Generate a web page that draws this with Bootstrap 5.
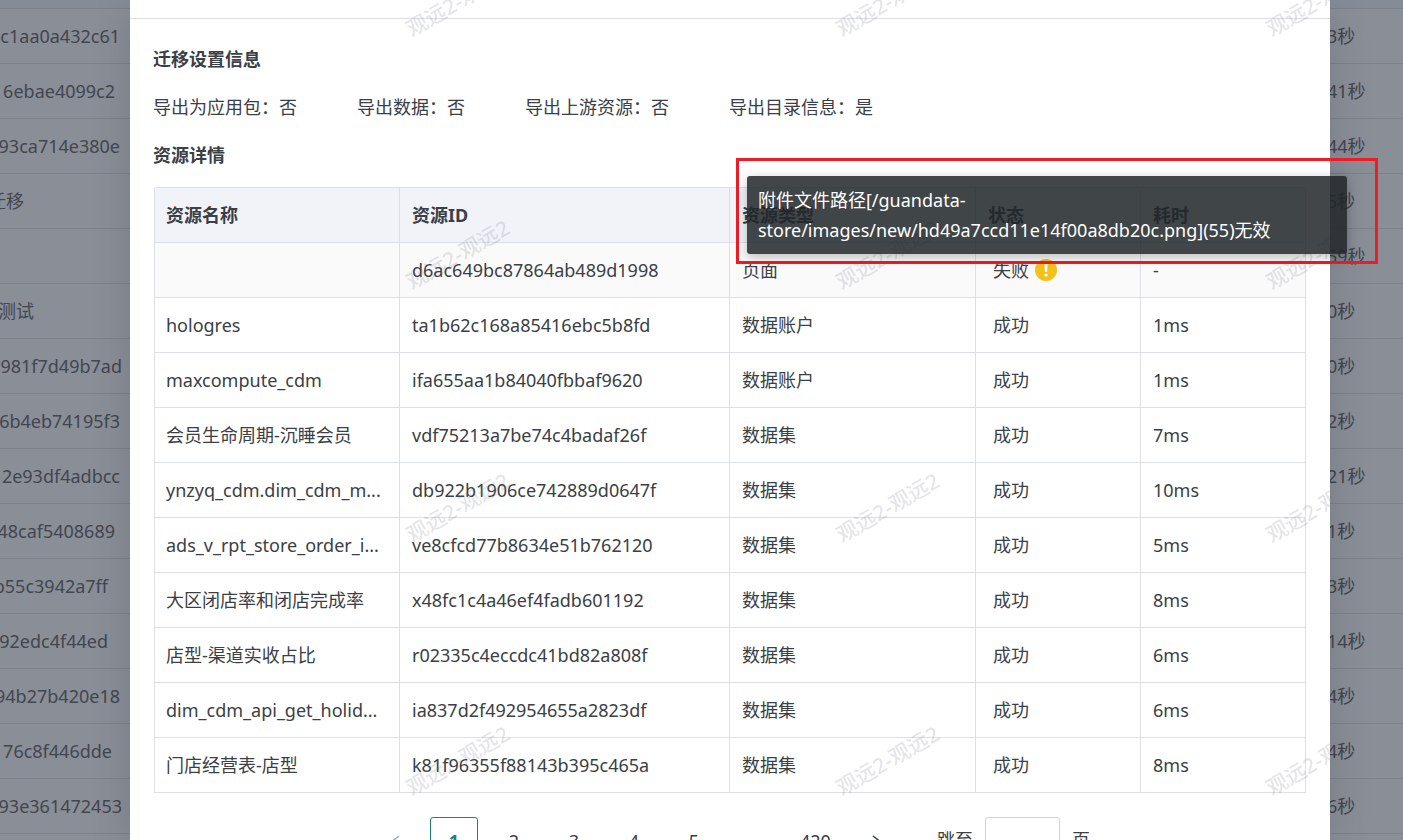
<!DOCTYPE html>
<html lang="zh-CN">
<head>
<meta charset="utf-8">
<meta name="viewport" content="width=device-width, initial-scale=1">
<title>资源迁移详情</title>
<link href="https://cdn.jsdelivr.net/npm/bootstrap@5.3.0/dist/css/bootstrap.min.css" rel="stylesheet">
<style>
  :root { --ink: #3a4046; --line: #dcdfe5; --teal: #18857c; }
  body { font-family: "Noto Sans", "Noto Sans CJK SC", sans-serif; font-size: 18px; color: var(--ink); background: #8a8e97; }

  /* dimmed list behind the dialog */
  .backdrop-list { color: #42464f; }
  .backdrop-list.ids { width: 130px; }
  .backdrop-list.times { width: 73px; }
  .list-head { height: 9px; background: #848d97; border-bottom: 1px solid #7c818b; }
  .list-line { height: 55px; line-height: 54px; border-bottom: 1px solid #7c818b; white-space: nowrap; }
  .ids .list-line { display: flex; justify-content: flex-end; }
  .times .list-line { text-indent: -3px; }
  .end-8 { padding-right: 8px; }
  .end-10 { padding-right: 10px; }
  .end-15 { padding-right: 15px; }
  .end-18 { padding-right: 18px; }
  .end-22 { padding-right: 22px; }
  .end-96 { padding-right: 96px; }
  .end-106 { padding-right: 106px; }

  .dialog { min-width: 0; z-index: 1; background: #fff; box-shadow: 0 8px 40px rgba(0, 0, 0, .14); }
  .dialog-head { height: 19px; border-bottom: 1px solid var(--line); }
  .dialog-body { padding: 24px; }
  .section-title { font-size: 18px; font-weight: 700; line-height: 32px; margin-bottom: 16px; }
  .settings { gap: 60px; line-height: 32px; margin-bottom: 16px; }
  .section-title, .settings { margin-left: -1px; }

  .res-table { table-layout: fixed; width: 100%; border-collapse: separate; border-spacing: 0; border: 1px solid var(--line); border-width: 1px 0 0 1px; border-radius: 3px 3px 0 0; }
  .res-table th, .res-table td { height: 55px; line-height: 54px; padding: 0 11px 0 12px; border: 1px solid var(--line); border-width: 0 1px 1px 0; overflow: hidden; text-overflow: ellipsis; white-space: nowrap; }
  .res-table th { background: #f2f3f8; font-weight: 700; }
  .res-table td:first-child, .res-table th:first-child { padding-left: 11px; }
  .res-table td:nth-child(4) { padding-left: 17px; }
  .res-table .failed td { background: #fafafa; }
  .c-name { width: 245px; } .c-id { width: 330px; } .c-type { width: 246px; } .c-state, .c-cost { width: 165px; }
  .warn-icon { width: 22px; height: 22px; margin-left: 6px; vertical-align: -4px; }

  .pager { gap: 12px; margin-top: 24px; line-height: 46px; }
  .pager button { min-width: 48px; height: 48px; padding: 0 9px; border: 1px solid transparent; border-radius: 3px; background: none; color: var(--ink); line-height: 44px; }
  .pager .current { border-color: var(--teal); color: var(--teal); font-weight: 700; }
  .pager .dots { width: 48px; text-align: center; }
  .pager svg { width: 16px; height: 16px; fill: none; stroke: currentColor; stroke-width: 1.5; }
  .pager button:disabled { color: #a3a9b3; }
  .pager label { margin-left: 24px; }
  .pager input { width: 75px; height: 48px; border: 1px solid #ced2da; border-radius: 3px; padding: 0 12px; }

  .stamp { pointer-events: none; inset: 0; }
  .callout { top: 158px; right: -48px; width: 642px; border: 3px solid #ee1c25; padding: 15px 28px 7px 8px; z-index: 2; }
  .tip { background: rgba(33, 38, 41, .85); color: #fff; border-radius: 3px; padding: 9px 11px; line-height: 30px; box-shadow: 0 3px 12px rgba(0, 0, 0, .25); }
</style>
</head>
<body>
<div class="d-flex vh-100 overflow-hidden">
  <aside class="backdrop-list ids flex-shrink-0 overflow-hidden">
    <div class="list-head"></div>
    <div class="list-line end-10">c1aa0a432c61</div>
    <div class="list-line end-15">6ebae4099c2</div>
    <div class="list-line end-10">93ca714e380e</div>
    <div class="list-line end-106">迁移</div>
    <div class="list-line"></div>
    <div class="list-line end-96">测试</div>
    <div class="list-line end-8">981f7d49b7ad</div>
    <div class="list-line end-10">6b4eb74195f3</div>
    <div class="list-line end-10">2e93df4adbcc</div>
    <div class="list-line end-15">48caf5408689</div>
    <div class="list-line end-22">b55c3942a7ff</div>
    <div class="list-line end-22">92edc4f44ed</div>
    <div class="list-line end-10">94b27b420e18</div>
    <div class="list-line end-18">76c8f446dde</div>
    <div class="list-line end-8">93e361472453</div>
  </aside>

  <main class="dialog position-relative flex-grow-1" role="dialog" aria-label="迁移详情">
    <div class="dialog-head"></div>
    <div class="dialog-body">
      <h2 class="section-title">迁移设置信息</h2>
      <div class="settings d-flex">
        <span>导出为应用包：否</span>
        <span>导出数据：否</span>
        <span>导出上游资源：否</span>
        <span>导出目录信息：是</span>
      </div>
      <h2 class="section-title">资源详情</h2>
      <table class="res-table">
        <colgroup><col class="c-name"><col class="c-id"><col class="c-type"><col class="c-state"><col class="c-cost"></colgroup>
        <thead>
          <tr><th>资源名称</th><th>资源ID</th><th>资源类型</th><th>状态</th><th>耗时</th></tr>
        </thead>
        <tbody>
          <tr class="failed"><td></td><td>d6ac649bc87864ab489d1998</td><td>页面</td><td>失败<svg class="warn-icon" viewBox="0 0 22 22" aria-hidden="true"><circle cx="11" cy="11" r="11" fill="#f2c21b"/><path d="M9.4 4.5h3.2l-.5 8.5h-2.2z" fill="#fff"/><circle cx="11" cy="16" r="1.6" fill="#fff"/></svg></td><td>-</td></tr>
          <tr><td>hologres</td><td>ta1b62c168a85416ebc5b8fd</td><td>数据账户</td><td>成功</td><td>1ms</td></tr>
          <tr><td>maxcompute_cdm</td><td>ifa655aa1b84040fbbaf9620</td><td>数据账户</td><td>成功</td><td>1ms</td></tr>
          <tr><td>会员生命周期-沉睡会员</td><td>vdf75213a7be74c4badaf26f</td><td>数据集</td><td>成功</td><td>7ms</td></tr>
          <tr><td>ynzyq_cdm.dim_cdm_m...</td><td>db922b1906ce742889d0647f</td><td>数据集</td><td>成功</td><td>10ms</td></tr>
          <tr><td>ads_v_rpt_store_order_i...</td><td>ve8cfcd77b8634e51b762120</td><td>数据集</td><td>成功</td><td>5ms</td></tr>
          <tr><td>大区闭店率和闭店完成率</td><td>x48fc1c4a46ef4fadb601192</td><td>数据集</td><td>成功</td><td>8ms</td></tr>
          <tr><td>店型-渠道实收占比</td><td>r02335c4eccdc41bd82a808f</td><td>数据集</td><td>成功</td><td>6ms</td></tr>
          <tr><td>dim_cdm_api_get_holid...</td><td>ia837d2f492954655a2823df</td><td>数据集</td><td>成功</td><td>6ms</td></tr>
          <tr><td>门店经营表-店型</td><td>k81f96355f88143b395c465a</td><td>数据集</td><td>成功</td><td>8ms</td></tr>
        </tbody>
      </table>

      <nav class="pager d-flex justify-content-center" aria-label="分页">
        <button type="button" disabled aria-label="上一页"><svg viewBox="0 0 16 16"><path d="M13 1 4 8l9 7"/></svg></button>
        <button type="button" class="current">1</button>
        <button type="button">2</button>
        <button type="button">3</button>
        <button type="button">4</button>
        <button type="button">5</button>
        <span class="dots">...</span>
        <button type="button">420</button>
        <button type="button" aria-label="下一页"><svg viewBox="0 0 16 16"><path d="m4 1 9 7-9 7"/></svg></button>
        <label for="jump">跳至</label>
        <input id="jump" type="text">
        <span>页</span>
      </nav>
    </div>

    <svg class="stamp position-absolute w-100 h-100" aria-hidden="true">
      <defs>
        <pattern id="mark-tile" x="270" y="-50" width="430" height="253" patternUnits="userSpaceOnUse">
          <text transform="translate(12 87) rotate(-30)" font-size="21" font-weight="500" fill="#5a6478" fill-opacity=".17">观远2-观远2</text>
        </pattern>
      </defs>
      <rect width="100%" height="100%" fill="url(#mark-tile)"/>
    </svg>

    <div class="callout position-absolute">
      <div class="tip" role="tooltip">附件文件路径[/guandata-<wbr>store/images/new/hd49a7ccd11e14f00a8db20c.png](55)无效</div>
    </div>
  </main>

  <aside class="backdrop-list times flex-shrink-0">
    <div class="list-head"></div>
    <div class="list-line">3秒</div>
    <div class="list-line">41秒</div>
    <div class="list-line">44秒</div>
    <div class="list-line">5秒</div>
    <div class="list-line">59秒</div>
    <div class="list-line">0秒</div>
    <div class="list-line">0秒</div>
    <div class="list-line">2秒</div>
    <div class="list-line">21秒</div>
    <div class="list-line">1秒</div>
    <div class="list-line">3秒</div>
    <div class="list-line">14秒</div>
    <div class="list-line">4秒</div>
    <div class="list-line">4秒</div>
    <div class="list-line">6秒</div>
  </aside>
</div>
<script src="https://cdn.jsdelivr.net/npm/bootstrap@5.3.0/dist/js/bootstrap.bundle.min.js"></script>
</body>
</html>
